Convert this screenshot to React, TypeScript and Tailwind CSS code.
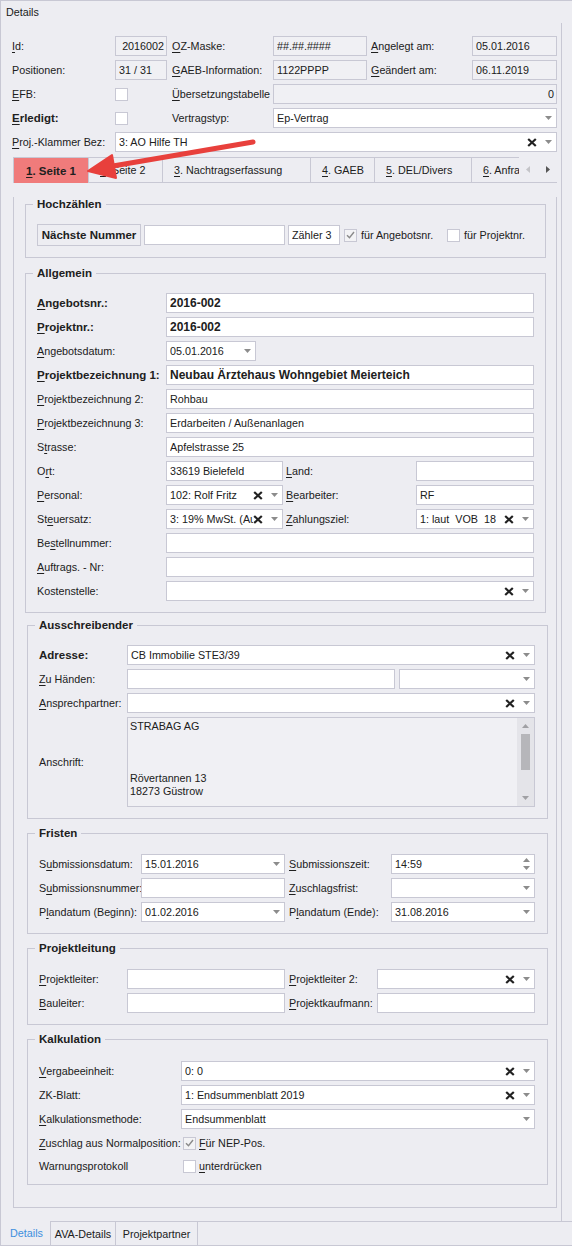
import React from 'react';

const BD = 'border-[#c8c8d4]';

type LblProps = { t: string; u?: number; b?: boolean; className?: string };

function Lbl({ t, u = -1, b = false, className = '' }: LblProps) {
  return (
    <div className={`flex h-[20px] shrink-0 items-center whitespace-pre ${b ? 'text-[11.5px] font-bold' : ''} ${className}`}>
      {u < 0 ? (
        t
      ) : (
        <>
          {t.slice(0, u)}
          <span className="underline underline-offset-[2px]">{t[u]}</span>
          {t.slice(u + 1)}
        </>
      )}
    </div>
  );
}

function ClearX() {
  return (
    <svg width="10" height="9" viewBox="0 0 10 9" className="mr-[8px] shrink-0">
      <path d="M1.2 1 L8.8 8 M8.8 1 L1.2 8" stroke="#222" strokeWidth="2.2" />
    </svg>
  );
}

function Arrow() {
  return (
    <svg width="7" height="4" viewBox="0 0 7 4" className="mr-[4px] shrink-0">
      <path d="M0 0 H7 L3.5 4 Z" fill="#8c8c8c" />
    </svg>
  );
}

function Spin() {
  return (
    <svg width="7" height="12" viewBox="0 0 7 12" className="mr-[4px] shrink-0">
      <path d="M0 4 H7 L3.5 0 Z M0 8 H7 L3.5 12 Z" fill="#8c8c8c" />
    </svg>
  );
}

type FieldProps = {
  v?: string;
  className?: string;
  ro?: boolean;
  right?: boolean;
  bold?: boolean;
  x?: boolean;
  dd?: boolean;
  spin?: boolean;
};

function Field({ v = '', className = '', ro = false, right = false, bold = false, x = false, dd = false, spin = false }: FieldProps) {
  return (
    <div className={`flex h-[20px] items-center border ${BD} ${ro ? 'bg-[#f0f0f4]' : 'bg-white'} pl-[3px] ${className}`}>
      <div className={`min-w-0 flex-1 overflow-hidden whitespace-pre ${right ? 'pr-[2px] text-right' : ''} ${bold ? 'text-[12px] font-bold' : ''}`}>{v}</div>
      {x && <ClearX />}
      {dd && <Arrow />}
      {spin && <Spin />}
    </div>
  );
}

function Check({ on = false, className = '' }: { on?: boolean; className?: string }) {
  return (
    <div className={`flex h-[13px] w-[13px] shrink-0 items-center justify-center border ${BD} ${on ? 'bg-[#f3f3f5]' : 'bg-white'} ${className}`}>
      {on && (
        <svg width="9" height="8" viewBox="0 0 9 8">
          <path d="M1 4.2 L3.5 6.8 L8 1" stroke="#8a8a8a" strokeWidth="1.4" fill="none" />
        </svg>
      )}
    </div>
  );
}

function Group({ title, className = '', inner = '', children }: { title: string; className?: string; inner?: string; children: React.ReactNode }) {
  return (
    <fieldset className={`border ${BD} ${className}`}>
      <legend className="ml-[7px] px-[4px] text-[11.5px] font-bold leading-[14px]">{title}</legend>
      <div className={inner}>{children}</div>
    </fieldset>
  );
}

function Row({ children, className = '' }: { children: React.ReactNode; className?: string }) {
  return <div className={`flex h-[20px] items-center ${className}`}>{children}</div>;
}

function Tab({ label, w, sel = false, clip = false }: { label: string; w: string; sel?: boolean; clip?: boolean }) {
  return (
    <div
      className={`flex h-[26px] shrink-0 items-center overflow-hidden whitespace-nowrap border-l border-t ${BD} ${w} ${
        sel ? 'justify-center bg-[#f07b7b] text-[11.5px] font-bold' : `border-b pl-[11px] ${clip ? '' : ''}`
      }`}
    >
      <span className="underline underline-offset-[2px]">{label[0]}</span>
      {label.slice(1)}
    </div>
  );
}

export default function App() {
  return (
    <div className={`relative flex h-[1246px] w-[572px] flex-col overflow-hidden border-l border-t ${BD} bg-[#ededf2] font-['Liberation_Sans',Arial,sans-serif] text-[10.75px] leading-[14px] text-[#202020]`}>
      <div className="h-[22px] shrink-0 pl-[5px] pt-[4px]">Details</div>

      <div className={`flex-1 w-[561px] border-r ${BD} pt-[13px]`}>
        {/* header */}
        <div className="flex w-[556px] flex-col gap-[4px] pl-[11px]">
          <Row>
            <Lbl t="Id:" u={0} className="w-[103px]" />
            <Field v="2016002" ro right className="w-[52px]" />
            <Lbl t="OZ-Maske:" u={0} className="w-[106px] pl-[5px]" />
            <Field v="##.##.####" ro className="w-[94px]" />
            <Lbl t="Angelegt am:" u={0} className="w-[105px] pl-[4px]" />
            <Field v="05.01.2016" ro className="flex-1" />
          </Row>
          <Row>
            <Lbl t="Positionen:" className="w-[103px]" />
            <Field v="31 / 31" ro className="w-[52px]" />
            <Lbl t="GAEB-Information:" u={0} className="w-[106px] pl-[5px]" />
            <Field v="1122PPPP" ro className="w-[94px]" />
            <Lbl t="Geändert am:" u={0} className="w-[105px] pl-[4px]" />
            <Field v="06.11.2019" ro className="flex-1" />
          </Row>
          <Row>
            <Lbl t="EFB:" u={0} className="w-[103px]" />
            <div className="w-[52px]">
              <Check />
            </div>
            <Lbl t="Übersetzungstabelle" u={0} className="w-[106px] pl-[5px]" />
            <Field v="0" ro right className="flex-1" />
          </Row>
          <Row>
            <Lbl t="Erledigt:" u={0} b className="w-[103px]" />
            <div className="w-[52px]">
              <Check />
            </div>
            <Lbl t="Vertragstyp:" className="w-[106px] pl-[5px]" />
            <Field v="Ep-Vertrag" dd className="flex-1" />
          </Row>
          <Row>
            <Lbl t="Proj.-Klammer Bez:" u={0} className="w-[103px]" />
            <Field v="3: AO Hilfe TH" x dd className="flex-1" />
          </Row>
        </div>

        {/* tabs */}
        <div className="ml-[12px] mt-[5px] flex w-[544px]">
          <Tab label="1. Seite 1" w="w-[75px]" sel />
          <Tab label="2. Seite 2" w="w-[74px]" />
          <Tab label="3. Nachtragserfassung" w="w-[148px]" />
          <Tab label="4. GAEB" w="w-[64px]" />
          <Tab label="5. DEL/Divers" w="w-[97px]" />
          <Tab label="6. Anfrage" w="w-[48px]" clip />
          <div className={`flex h-[26px] flex-1 items-center border-b ${BD} pl-[7px]`}>
            <svg width="4" height="7" viewBox="0 0 4 7">
              <path d="M4 0 V7 L0 3.5 Z" fill="#c4c4c8" />
            </svg>
            <svg width="4" height="7" viewBox="0 0 4 7" className="ml-[16px]">
              <path d="M0 0 V7 L4 3.5 Z" fill="#555" />
            </svg>
          </div>
        </div>

        {/* tab page */}
        <div className={`ml-[12px] w-[544px] border-b border-l border-r ${BD} pb-[22px] pl-[11px] pr-[10px]`}>
          <Group title="Hochzählen" className="mt-[14px]" inner="px-[11px] pt-[13px] pb-[11px]">
            <div className="flex h-[22px] items-center">
              <div className={`flex h-[22px] w-[104px] items-center justify-center border ${BD} text-[11.5px] font-bold`}>Nächste Nummer</div>
              <Field className="ml-[3px] w-[141px]" />
              <Field v="Zähler 3" className="ml-[3px] w-[52px]" />
              <Check on className="ml-[4px]" />
              <span className="ml-[4px] w-[82px] whitespace-nowrap">für Angebotsnr.</span>
              <Check className="ml-[4px]" />
              <span className="ml-[4px] whitespace-nowrap">für Projektnr.</span>
            </div>
          </Group>

          <Group title="Allgemein" className="mt-[8px]" inner="flex flex-col gap-[4px] px-[11px] pt-[13px] pb-[11px]">
            <Row>
              <Lbl t="Angebotsnr.:" u={0} b className="w-[129px]" />
              <Field v="2016-002" bold className="flex-1" />
            </Row>
            <Row>
              <Lbl t="Projektnr.:" u={0} b className="w-[129px]" />
              <Field v="2016-002" bold className="flex-1" />
            </Row>
            <Row>
              <Lbl t="Angebotsdatum:" u={0} className="w-[129px]" />
              <Field v="05.01.2016" dd className="w-[90px]" />
            </Row>
            <Row>
              <Lbl t="Projektbezeichnung 1:" u={0} b className="w-[129px]" />
              <Field v="Neubau Ärztehaus Wohngebiet Meierteich" bold className="flex-1" />
            </Row>
            <Row>
              <Lbl t="Projektbezeichnung 2:" u={0} className="w-[129px]" />
              <Field v="Rohbau" className="flex-1" />
            </Row>
            <Row>
              <Lbl t="Projektbezeichnung 3:" u={0} className="w-[129px]" />
              <Field v="Erdarbeiten / Außenanlagen" className="flex-1" />
            </Row>
            <Row>
              <Lbl t="Strasse:" u={1} className="w-[129px]" />
              <Field v="Apfelstrasse 25" className="flex-1" />
            </Row>
            <Row>
              <Lbl t="Ort:" u={1} className="w-[129px]" />
              <Field v="33619 Bielefeld" className="w-[117px]" />
              <Lbl t="Land:" u={0} className="w-[133px] pl-[3px]" />
              <Field className="flex-1" />
            </Row>
            <Row>
              <Lbl t="Personal:" u={0} className="w-[129px]" />
              <Field v="102: Rolf Fritz" x dd className="w-[117px]" />
              <Lbl t="Bearbeiter:" u={0} className="w-[133px] pl-[3px]" />
              <Field v="RF" className="flex-1" />
            </Row>
            <Row>
              <Lbl t="Steuersatz:" u={2} className="w-[129px]" />
              <Field v="3: 19% MwSt. (Ausgang)" x dd className="w-[117px]" />
              <Lbl t="Zahlungsziel:" u={0} className="w-[133px] pl-[3px]" />
              <Field v="1: laut  VOB  18" x dd className="flex-1" />
            </Row>
            <Row>
              <Lbl t="Bestellnummer:" u={2} className="w-[129px]" />
              <Field className="flex-1" />
            </Row>
            <Row>
              <Lbl t="Auftrags. - Nr:" u={0} className="w-[129px]" />
              <Field className="flex-1" />
            </Row>
            <Row>
              <Lbl t="Kostenstelle:" className="w-[129px]" />
              <Field x dd className="flex-1" />
            </Row>
          </Group>

          <div className="-mr-[2px] ml-[2px]">
            <Group title="Ausschreibender" className="mt-[5px]" inner="flex flex-col gap-[4px] pl-[11px] pr-[12px] pt-[13px] pb-[11px]">
              <Row>
                <Lbl t="Adresse:" b className="w-[88px]" />
                <Field v="CB Immobilie STE3/39" x dd className="flex-1" />
              </Row>
              <Row>
                <Lbl t="Zu Händen:" u={0} className="w-[88px]" />
                <Field className="w-[268px]" />
                <Field dd className="ml-[4px] flex-1" />
              </Row>
              <Row>
                <Lbl t="Ansprechpartner:" u={0} className="w-[88px]" />
                <Field x dd className="flex-1" />
              </Row>
              <div className="flex h-[90px] items-center">
                <Lbl t="Anschrift:" className="w-[88px]" />
                <div className={`flex h-[90px] flex-1 border ${BD} bg-[#f0f0f4]`}>
                  <div className="flex-1 whitespace-pre pl-[2px] pt-[2px] leading-[13px]">
                    {'STRABAG AG\n\n\n\nRövertannen 13\n18273 Güstrow'}
                  </div>
                  <div className="flex w-[17px] flex-col items-center bg-[#e4e4e9] pt-[6px] pb-[6px]">
                    <svg width="7" height="4" viewBox="0 0 7 4">
                      <path d="M0 4 H7 L3.5 0 Z" fill="#a0a0a4" />
                    </svg>
                    <div className="mt-[6px] h-[36px] w-[9px] bg-[#b6b6ba]" />
                    <div className="flex-1" />
                    <svg width="7" height="4" viewBox="0 0 7 4">
                      <path d="M0 0 H7 L3.5 4 Z" fill="#a0a0a4" />
                    </svg>
                  </div>
                </div>
              </div>
            </Group>

            <Group title="Fristen" className="mt-[7px]" inner="flex flex-col gap-[4px] pl-[11px] pr-[12px] pt-[14px] pb-[11px]">
              <Row>
                <Lbl t="Submissionsdatum:" u={1} className="w-[102px]" />
                <Field v="15.01.2016" dd className="w-[144px]" />
                <Lbl t="Submissionszeit:" u={0} className="w-[106px] pl-[4px]" />
                <Field v="14:59" spin className="flex-1" />
              </Row>
              <Row>
                <Lbl t="Submissionsnummer:" u={1} className="w-[102px]" />
                <Field className="w-[144px]" />
                <Lbl t="Zuschlagsfrist:" u={0} className="w-[106px] pl-[4px]" />
                <Field dd className="flex-1" />
              </Row>
              <Row>
                <Lbl t="Plandatum (Beginn):" u={1} className="w-[102px]" />
                <Field v="01.02.2016" dd className="w-[144px]" />
                <Lbl t="Plandatum (Ende):" u={1} className="w-[106px] pl-[4px]" />
                <Field v="31.08.2016" dd className="flex-1" />
              </Row>
            </Group>

            <Group title="Projektleitung" className="mt-[7px]" inner="flex flex-col gap-[4px] pl-[11px] pr-[12px] pt-[14px] pb-[11px]">
              <Row>
                <Lbl t="Projektleiter:" u={0} className="w-[88px]" />
                <Field className="w-[158px]" />
                <Lbl t="Projektleiter 2:" u={0} className="w-[92px] pl-[4px]" />
                <Field x dd className="flex-1" />
              </Row>
              <Row>
                <Lbl t="Bauleiter:" u={0} className="w-[88px]" />
                <Field className="w-[158px]" />
                <Lbl t="Projektkaufmann:" u={0} className="w-[92px] pl-[4px]" />
                <Field className="flex-1" />
              </Row>
            </Group>

            <Group title="Kalkulation" className="mt-[7px]" inner="flex flex-col gap-[4px] pl-[11px] pr-[12px] pt-[15px] pb-[8px]">
              <Row>
                <Lbl t="Vergabeeinheit:" u={0} className="w-[142px]" />
                <Field v="0: 0" x dd className="flex-1" />
              </Row>
              <Row>
                <Lbl t="ZK-Blatt:" className="w-[142px]" />
                <Field v="1: Endsummenblatt 2019" x dd className="flex-1" />
              </Row>
              <Row>
                <Lbl t="Kalkulationsmethode:" u={0} className="w-[142px]" />
                <Field v="Endsummenblatt" dd className="flex-1" />
              </Row>
              <Row>
                <Lbl t="Zuschlag aus Normalposition:" u={0} className="w-[144px]" />
                <Check on />
                <Lbl t="Für NEP-Pos." u={0} className="ml-[3px]" />
              </Row>
              <Row className="-mt-[1px]">
                <Lbl t="Warnungsprotokoll" className="w-[144px]" />
                <Check />
                <Lbl t="unterdrücken" u={0} className="ml-[3px]" />
              </Row>
            </Group>
          </div>
        </div>
      </div>

      {/* bottom tabs */}
      <div className={`flex h-[25px] shrink-0 border-b ${BD}`}>
        <div className={`flex w-[50px] items-center justify-center border-r ${BD} pl-[2px] text-[#3d8fde]`}>Details</div>
        <div className={`flex w-[65px] items-center justify-center border-r border-t ${BD}`}>AVA-Details</div>
        <div className={`flex w-[82px] items-center justify-center border-r border-t ${BD}`}>Projektpartner</div>
        <div className={`flex-1 border-t ${BD}`} />
      </div>

      {/* annotation arrow */}
      <svg className="pointer-events-none absolute left-0 top-0" width="572" height="200" viewBox="0 0 572 200">
        <path d="M252 141 L112 165" stroke="#e8403c" strokeWidth="5" strokeLinecap="round" />
        <path d="M87 170 L111 154 L115 177 Z" fill="#e8403c" stroke="#e8403c" strokeWidth="2" strokeLinejoin="round" />
      </svg>
    </div>
  );
}
